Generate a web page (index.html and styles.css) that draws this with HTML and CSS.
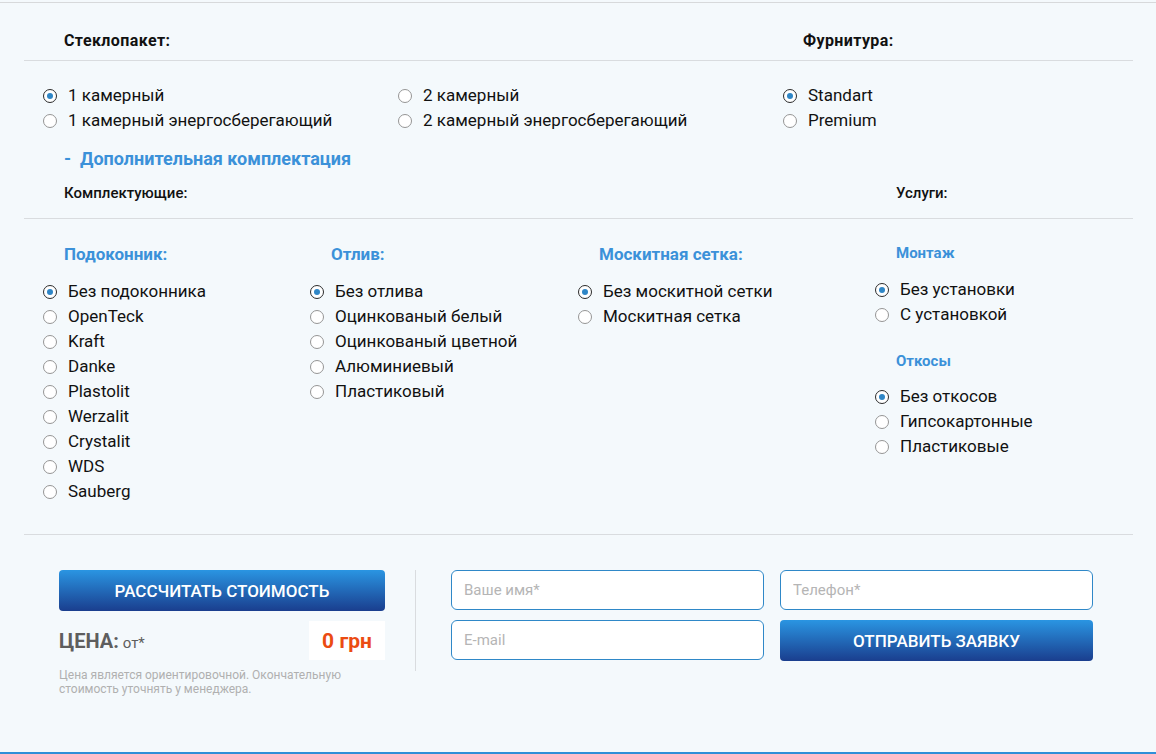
FILE: index.html
```html
<!DOCTYPE html>
<html lang="ru">
<head>
<meta charset="utf-8">
<title>Калькулятор</title>
<link rel="stylesheet" href="styles.css">
</head>
<body>
<div class="page">
  <div class="wrap">
    <div class="top-head">
      <div class="h-main">Стеклопакет:</div>
      <div class="h-main">Фурнитура:</div>
    </div>
    <div class="top-opts">
      <div class="col">
        <label class="opt"><input type="radio" name="g1" checked><span>1 камерный</span></label>
        <label class="opt"><input type="radio" name="g1"><span>1 камерный энергосберегающий</span></label>
      </div>
      <div class="col">
        <label class="opt"><input type="radio" name="g1"><span>2 камерный</span></label>
        <label class="opt"><input type="radio" name="g1"><span>2 камерный энергосберегающий</span></label>
      </div>
      <div class="col">
        <label class="opt"><input type="radio" name="f" checked><span>Standart</span></label>
        <label class="opt"><input type="radio" name="f"><span>Premium</span></label>
      </div>
    </div>
    <div class="extra">-&nbsp; Дополнительная комплектация</div>
    <div class="sub-head">
      <div class="h-sub">Комплектующие:</div>
      <div class="h-sub">Услуги:</div>
    </div>
    <div class="acc">
      <div class="col">
        <div class="h-blue">Подоконник:</div>
        <label class="opt"><input type="radio" name="p" checked><span>Без подоконника</span></label>
        <label class="opt"><input type="radio" name="p"><span>OpenTeck</span></label>
        <label class="opt"><input type="radio" name="p"><span>Kraft</span></label>
        <label class="opt"><input type="radio" name="p"><span>Danke</span></label>
        <label class="opt"><input type="radio" name="p"><span>Plastolit</span></label>
        <label class="opt"><input type="radio" name="p"><span>Werzalit</span></label>
        <label class="opt"><input type="radio" name="p"><span>Crystalit</span></label>
        <label class="opt"><input type="radio" name="p"><span>WDS</span></label>
        <label class="opt"><input type="radio" name="p"><span>Sauberg</span></label>
      </div>
      <div class="col">
        <div class="h-blue">Отлив:</div>
        <label class="opt"><input type="radio" name="o" checked><span>Без отлива</span></label>
        <label class="opt"><input type="radio" name="o"><span>Оцинкованый белый</span></label>
        <label class="opt"><input type="radio" name="o"><span>Оцинкованый цветной</span></label>
        <label class="opt"><input type="radio" name="o"><span>Алюминиевый</span></label>
        <label class="opt"><input type="radio" name="o"><span>Пластиковый</span></label>
      </div>
      <div class="col">
        <div class="h-blue">Москитная сетка:</div>
        <label class="opt"><input type="radio" name="m" checked><span>Без москитной сетки</span></label>
        <label class="opt"><input type="radio" name="m"><span>Москитная сетка</span></label>
      </div>
      <div class="col">
        <div class="h-blue small">Монтаж</div>
        <label class="opt"><input type="radio" name="mo" checked><span>Без установки</span></label>
        <label class="opt"><input type="radio" name="mo"><span>С установкой</span></label>
        <div class="h-blue small second">Откосы</div>
        <label class="opt"><input type="radio" name="ot" checked><span>Без откосов</span></label>
        <label class="opt"><input type="radio" name="ot"><span>Гипсокартонные</span></label>
        <label class="opt"><input type="radio" name="ot"><span>Пластиковые</span></label>
      </div>
    </div>
    <div class="bottom">
      <div class="calc">
        <button class="btn" type="button">РАССЧИТАТЬ СТОИМОСТЬ</button>
        <div class="price-row">
          <div class="price-label"><b>ЦЕНА:</b> <span>от*</span></div>
          <div class="price-val">0 грн</div>
        </div>
        <p class="note">Цена является ориентировочной. Окончательную стоимость уточнять у менеджера.</p>
      </div>
      <div class="divider"></div>
      <form class="form">
        <input class="field" type="text" placeholder="Ваше имя*">
        <input class="field" type="text" placeholder="Телефон*">
        <input class="field" type="text" placeholder="E-mail">
        <button class="btn send" type="button">ОТПРАВИТЬ ЗАЯВКУ</button>
      </form>
    </div>
  </div>
</div>
</body>
</html>
```

FILE: styles.css
```css
* { box-sizing: border-box; }
html, body { margin: 0; padding: 0; }
body {
  background: #f4f9fc;
  font-family: Roboto, "Liberation Sans", Arial, sans-serif;
  color: #111;
  padding-top: 2px;
}
.page {
  height: 752px;
  border-top: 1px solid #d7d9db;
  border-bottom: 2px solid #2f8fd8;
  overflow: hidden;
}
.wrap {
  margin: 0 23px 0 24px;
}
.top-head {
  display: grid;
  grid-template-columns: 739px 1fr;
  padding: 28px 0 9px 40px;
  border-bottom: 1px solid #d9dcdf;
}
.h-main {
  font-size: 16px;
  font-weight: 700;
  line-height: 20px;
  letter-spacing: 0.4px;
}
.top-opts {
  display: grid;
  grid-template-columns: 355px 385px 1fr;
  padding: 22px 0 0 19px;
}
.col { display: flex; flex-direction: column; }
.opt {
  display: flex;
  align-items: center;
  gap: 11px;
  font-size: 17px;
  line-height: 25px;
  height: 25px;
  cursor: pointer;
}
.opt input {
  appearance: none;
  -webkit-appearance: none;
  margin: 0;
  width: 14px;
  height: 14px;
  border: 1px solid #959595;
  border-radius: 50%;
  background: #fff;
  flex: none;
  display: grid;
  place-items: center;
}
.opt input:checked {
  border-color: #2b2b2b;
}
.opt input:checked::after {
  content: "";
  width: 6px;
  height: 6px;
  border-radius: 50%;
  background: #2f86c6;
}
.extra {
  margin: 14px 0 0 40px;
  font-size: 18px;
  font-weight: 700;
  line-height: 24px;
  color: #3b91d9;
}
.sub-head {
  display: grid;
  grid-template-columns: 832px 1fr;
  padding: 13px 0 16px 40px;
  border-bottom: 1px solid #d9dcdf;
}
.h-sub {
  font-size: 15px;
  font-weight: 500;
  line-height: 18px;
}
.acc {
  display: grid;
  grid-template-columns: 267px 268px 297px 1fr;
  padding: 25px 0 30px 19px;
  border-bottom: 1px solid #d9dcdf;
}
.h-blue {
  color: #3b91d9;
  font-size: 17px;
  font-weight: 700;
  line-height: 20px;
  margin: 0 0 15px 21px;
}
.h-blue.small {
  font-size: 15px;
  line-height: 18px;
  margin-top: 0;
  margin-bottom: 15px;
}
.h-blue.second { margin-top: 25px; margin-bottom: 14px; }
.bottom {
  display: flex;
  padding: 35px 0 0 35px;
}
.calc { width: 326px; }
.btn {
  display: block;
  width: 100%;
  height: 41px;
  border: 0;
  border-radius: 4px;
  background: linear-gradient(#2a95e2, #1a3e8e);
  color: #fff;
  font-family: inherit;
  font-size: 17px;
  font-weight: 500;
  cursor: pointer;
}
.price-row {
  display: flex;
  justify-content: space-between;
  align-items: center;
  margin-top: 10px;
}
.price-label { color: #5e5e5e; }
.price-label b { font-size: 20px; font-weight: 700; }
.price-label span { font-size: 15px; }
.price-val {
  background: #fff;
  width: 76px;
  height: 39px;
  display: flex;
  align-items: center;
  justify-content: center;
  color: #eb4b12;
  font-size: 21px;
  font-weight: 700;
}
.note {
  margin: 8px 0 0;
  font-size: 12px;
  line-height: 14px;
  color: #b0b0b0;
  padding-right: 8px;
}
.divider {
  width: 1px;
  height: 101px;
  background: #d9dcdf;
  margin: 0 35px 0 30px;
}
.form {
  display: grid;
  grid-template-columns: 313px 313px;
  grid-template-rows: 40px 41px;
  column-gap: 16px;
  row-gap: 10px;
  align-content: start;
  margin: 0;
}
.field {
  height: 40px;
  border: 1px solid #2f88c8;
  border-radius: 6px;
  background: #fff;
  padding: 0 12px;
  font-family: inherit;
  font-size: 15px;
  color: #333;
  outline: none;
}
.field::placeholder { color: #b5b5b5; }
.send { height: 41px; }
```
